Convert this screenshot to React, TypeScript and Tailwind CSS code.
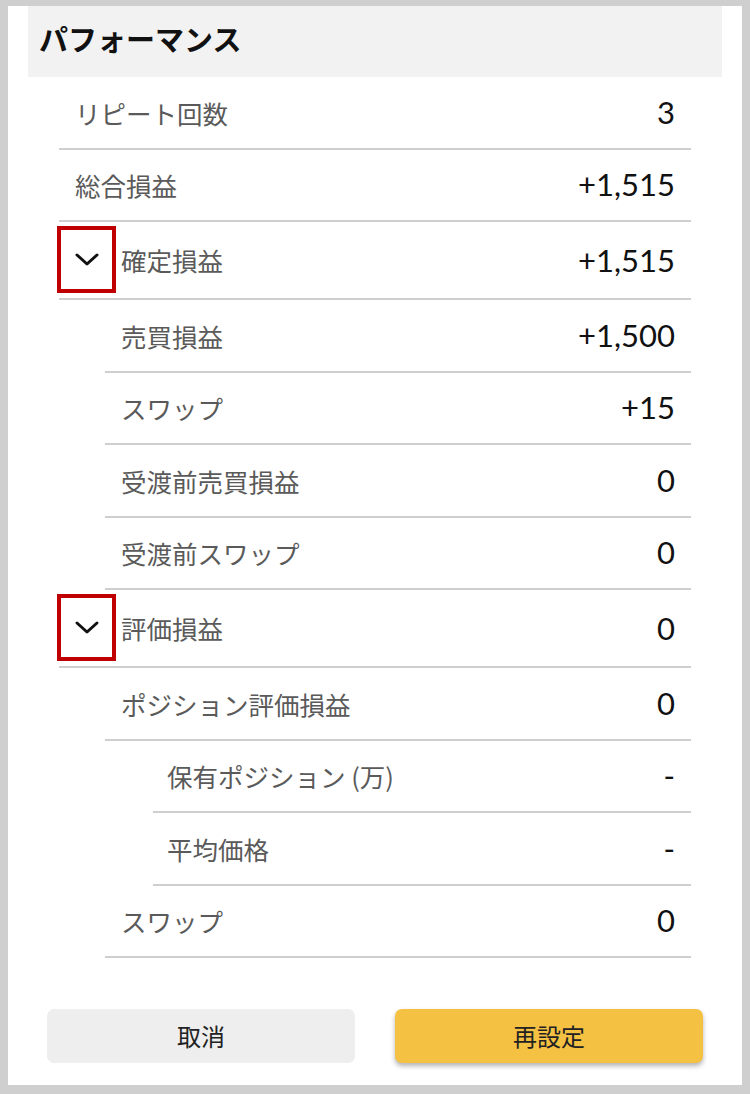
import React from "react";

const JP = "font-['Noto_Sans_CJK_JP','Noto_Sans',sans-serif]";
const NUM = "font-['Lato','Noto_Sans_CJK_JP',sans-serif]";

type RowProps = {
  label: string;
  value: string;
  level?: 0 | 1 | 2;
  chevron?: boolean;
};

function Chevron() {
  return (
    <div className="absolute left-[-2px] top-[4px] w-[59px] h-[67px] border-[4px] border-[#c00000] flex items-center justify-center">
      <svg width="26" height="15" viewBox="0 0 26 15" fill="none">
        <polyline points="3,3 13,12 23,3" stroke="#111" strokeWidth="3" strokeLinecap="round" strokeLinejoin="round" />
      </svg>
    </div>
  );
}

function Row({ label, value, level = 0, chevron = false }: RowProps) {
  const ml = level === 0 ? "ml-0" : level === 1 ? "ml-[46px]" : "ml-[94px]";
  const pl = chevron ? "pl-[62px]" : level === 2 ? "pl-[14px]" : "pl-[16px]";
  const h = chevron ? "h-[78px]" : "h-[72.5px]";
  return (
    <div className={`relative ${ml} ${h} border-b-2 border-[#cfcfcf] flex items-center justify-between ${pl} pr-[16px]`}>
      {chevron && <Chevron />}
      <span className={`${JP} text-[25.5px] text-[#5a5a5a] leading-none`}>{label}</span>
      <span className={`${NUM} text-[31px] text-[#111111] leading-none`}>{value}</span>
    </div>
  );
}

export default function App() {
  return (
    <div className="min-h-[1094px] bg-[#d0cfd0] pt-[6px] px-[8px] pb-[9px]">
      <div className="bg-white h-[1079px] flex flex-col">
        <div className="mx-[20px] h-[71px] bg-[#f2f2f2] flex items-center pl-[11px] pb-[6px]">
          <h1 className={`${JP} text-[29px] font-bold text-[#111111] leading-none`}>パフォーマンス</h1>
        </div>
        <div className="mx-[51px]">
          <Row label="リピート回数" value="3" />
          <Row label="総合損益" value="+1,515" />
          <Row label="確定損益" value="+1,515" chevron />
          <Row label="売買損益" value="+1,500" level={1} />
          <Row label="スワップ" value="+15" level={1} />
          <Row label="受渡前売買損益" value="0" level={1} />
          <Row label="受渡前スワップ" value="0" level={1} />
          <Row label="評価損益" value="0" chevron />
          <Row label="ポジション評価損益" value="0" level={1} />
          <Row label="保有ポジション (万)" value="-" level={2} />
          <Row label="平均価格" value="-" level={2} />
          <Row label="スワップ" value="0" level={1} />
        </div>
        <div className="mt-[51px] px-[39px] flex gap-[40px]">
          <button className={`flex-1 h-[54px] rounded-[7px] bg-[#eeeeee] ${JP} text-[24px] text-[#222222]`}>取消</button>
          <button className={`flex-1 h-[54px] rounded-[7px] bg-[#f5c143] shadow-[0_3px_5px_rgba(0,0,0,0.3)] ${JP} text-[24px] text-[#222222]`}>再設定</button>
        </div>
      </div>
    </div>
  );
}
